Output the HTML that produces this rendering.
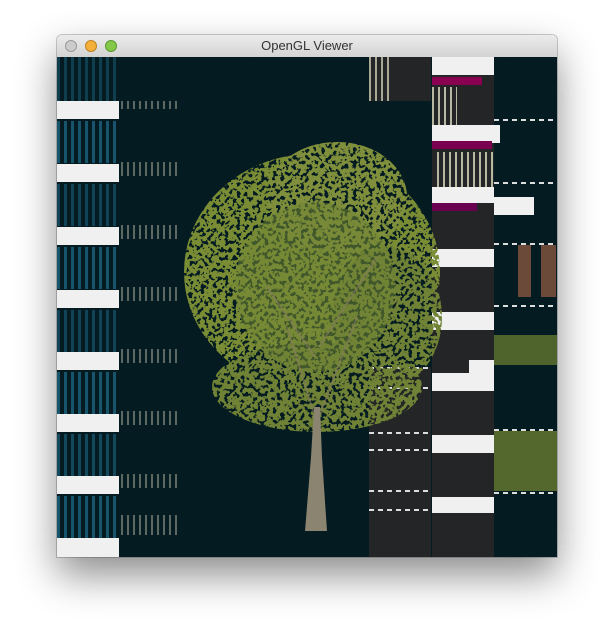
<!DOCTYPE html>
<html><head><style>
body{margin:0;width:614px;height:636px;background:#fff;position:relative;overflow:hidden;font-family:"Liberation Sans",sans-serif}
.win{position:absolute;left:57px;top:35px;width:500px;height:522px;box-shadow:0 18px 40px rgba(0,0,0,.45),0 0 0 1px rgba(0,0,0,.2);border-radius:5px 5px 0 0;overflow:hidden}
.tb{height:22px;background:linear-gradient(#ececec,#d3d3d3);border-bottom:1px solid #a8a8a8;text-align:center;font-size:13px;line-height:22px;color:#333;position:relative}
.dot{position:absolute;top:5px;width:12px;height:12px;border-radius:50%}
.c{position:absolute;left:0;top:22px;width:500px;height:500px;background:#041b21;overflow:hidden}
.b{position:absolute}
.w{background:#f0f0f0}
.g{background:#232526}
.bl{background:repeating-linear-gradient(90deg,#2b8fb8 0 3px,transparent 3px 7px),repeating-linear-gradient(0deg,transparent 0 3px,#041b21 3px 6px);opacity:.5}
.n{background:repeating-linear-gradient(90deg,#c9c9b0 0 2px,transparent 2px 6px);opacity:.45}
.dash{background:repeating-linear-gradient(90deg,#ddd 0 5px,transparent 5px 9px);height:2px}
.lf{background:#6f8232}
</style></head><body>
<div class="win">
<div class="tb"><div class="dot" style="left:8px;background:#ccc;border:1px solid #999;width:10px;height:10px"></div><div class="dot" style="left:28px;background:#f3b13b;border:1px solid #c08020;width:10px;height:10px"></div><div class="dot" style="left:48px;background:#84c84a;border:1px solid #5a9a30;width:10px;height:10px"></div>OpenGL Viewer</div>
<div class="c">
<div class="b bl" style="left:0;top:0;width:62px;height:44px;opacity:.3"></div>
<div class="b w" style="left:0;top:44px;width:62px;height:18px"></div>
<div class="b bl" style="left:0;top:64px;width:62px;height:42px"></div>
<div class="b w" style="left:0;top:107px;width:62px;height:18px"></div>
<div class="b bl" style="left:0;top:127px;width:62px;height:42px;opacity:.35"></div>
<div class="b w" style="left:0;top:170px;width:62px;height:18px"></div>
<div class="b bl" style="left:0;top:190px;width:62px;height:42px"></div>
<div class="b w" style="left:0;top:233px;width:62px;height:18px"></div>
<div class="b bl" style="left:0;top:253px;width:62px;height:42px;opacity:.35"></div>
<div class="b w" style="left:0;top:295px;width:62px;height:18px"></div>
<div class="b bl" style="left:0;top:315px;width:62px;height:42px"></div>
<div class="b w" style="left:0;top:357px;width:62px;height:18px"></div>
<div class="b bl" style="left:0;top:377px;width:62px;height:42px;opacity:.4"></div>
<div class="b w" style="left:0;top:419px;width:62px;height:18px"></div>
<div class="b bl" style="left:0;top:439px;width:62px;height:42px"></div>
<div class="b w" style="left:0;top:481px;width:62px;height:19px"></div>
<div class="b n" style="left:64px;top:44px;width:60px;height:8px"></div>
<div class="b n" style="left:64px;top:105px;width:60px;height:14px"></div>
<div class="b n" style="left:64px;top:168px;width:60px;height:14px"></div>
<div class="b n" style="left:64px;top:230px;width:60px;height:14px"></div>
<div class="b n" style="left:64px;top:292px;width:60px;height:14px"></div>
<div class="b n" style="left:64px;top:354px;width:60px;height:14px"></div>
<div class="b n" style="left:64px;top:417px;width:60px;height:14px"></div>
<div class="b n" style="left:64px;top:458px;width:60px;height:20px"></div>
<div class="b g" style="left:312px;top:0;width:62px;height:44px"></div>
<div class="b n" style="left:312px;top:0;width:20px;height:44px;opacity:.8"></div>
<div class="b g" style="left:375px;top:0;width:62px;height:500px"></div>
<div class="b g" style="left:312px;top:310px;width:62px;height:190px"></div>
<div class="b w" style="left:375px;top:0;width:62px;height:18px"></div>
<div class="b" style="left:375px;top:20px;width:50px;height:8px;background:#8a0050"></div>
<div class="b n" style="left:375px;top:30px;width:25px;height:40px;opacity:.9"></div>
<div class="b w" style="left:375px;top:68px;width:68px;height:18px"></div>
<div class="b" style="left:375px;top:84px;width:60px;height:8px;background:#7a0050"></div>
<div class="b n" style="left:380px;top:95px;width:57px;height:35px;opacity:.9"></div>
<div class="b w" style="left:375px;top:130px;width:62px;height:16px"></div>
<div class="b" style="left:375px;top:146px;width:45px;height:8px;background:#6a0050"></div>
<div class="b w" style="left:437px;top:140px;width:40px;height:18px"></div>
<div class="b w" style="left:375px;top:192px;width:62px;height:18px"></div>
<div class="b w" style="left:375px;top:255px;width:62px;height:18px"></div>
<div class="b w" style="left:412px;top:303px;width:25px;height:16px"></div>
<div class="b w" style="left:375px;top:316px;width:62px;height:18px"></div>
<div class="b w" style="left:375px;top:378px;width:62px;height:18px"></div>
<div class="b w" style="left:375px;top:440px;width:62px;height:16px"></div>
<div class="b dash" style="left:437px;top:62px;width:63px"></div>
<div class="b dash" style="left:437px;top:125px;width:63px"></div>
<div class="b dash" style="left:437px;top:186px;width:63px"></div>
<div class="b dash" style="left:437px;top:248px;width:63px"></div>
<div class="b dash" style="left:437px;top:372px;width:63px"></div>
<div class="b dash" style="left:437px;top:435px;width:63px"></div>
<div class="b dash" style="left:312px;top:310px;width:62px"></div>
<div class="b dash" style="left:312px;top:330px;width:62px"></div>
<div class="b dash" style="left:312px;top:375px;width:62px"></div>
<div class="b dash" style="left:312px;top:392px;width:62px"></div>
<div class="b dash" style="left:312px;top:433px;width:62px"></div>
<div class="b dash" style="left:312px;top:452px;width:62px"></div>
<div class="b" style="left:461px;top:188px;width:13px;height:52px;background:#6b4a3a"></div>
<div class="b" style="left:484px;top:188px;width:15px;height:52px;background:#6b4a3a"></div>
<div class="b lf" style="left:437px;top:278px;width:63px;height:30px;opacity:.7"></div>
<div class="b lf" style="left:437px;top:374px;width:63px;height:60px;opacity:.75"></div>
<svg class="b" style="left:0;top:0" width="500" height="500">
<defs><filter id="f" x="0" y="0" width="100%" height="100%"><feTurbulence type="fractalNoise" baseFrequency=".25" numOctaves="2" seed="5"/><feColorMatrix values="0 0 0 0 0 0 0 0 0 0 0 0 0 0 0 0 0 0 -14 8.4"/><feComposite in="SourceGraphic" operator="in"/></filter></defs>
<g filter="url(#f)">
<ellipse cx="255" cy="215" rx="128" ry="118" fill="#7a8d36"/>
<ellipse cx="280" cy="140" rx="70" ry="55" fill="#7f8f3a"/>
<ellipse cx="260" cy="330" rx="105" ry="45" fill="#6f8234"/>
<ellipse cx="330" cy="260" rx="55" ry="70" fill="#6f8234"/>
</g>
<ellipse cx="258" cy="230" rx="80" ry="85" fill="#738634" opacity=".55"/>
<path d="M248 474 L254 400 L257 350 L263 350 L265 400 L270 474 Z" fill="#8a8470"/>
<path d="M258 360 L230 270 M262 360 L300 260 M258 300 L210 230 M262 290 L320 200" stroke="#8a7d65" stroke-width="2" opacity=".5"/>
</svg>
</div></div>
</body></html>
